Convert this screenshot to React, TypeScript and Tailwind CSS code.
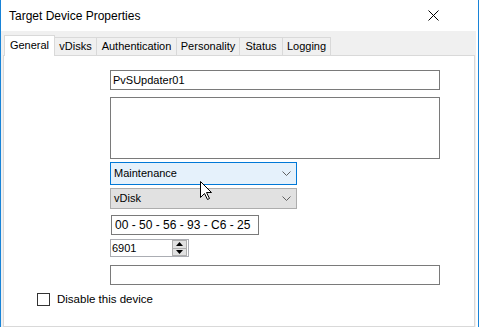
import { useState } from "react";

const TABS = [
  { label: "General", w: "w-[51px]" },
  { label: "vDisks", w: "w-[42px]" },
  { label: "Authentication", w: "w-[80px]" },
  { label: "Personality", w: "w-[63px]" },
  { label: "Status", w: "w-[43px]" },
  { label: "Logging", w: "w-[48px]" },
];

function Chevron() {
  return (
    <svg width="9" height="5" viewBox="0 0 9 5" className="shrink-0">
      <path d="M0.5 0.5 L4.5 4.5 L8.5 0.5" fill="none" stroke="#606060" strokeWidth="1" />
    </svg>
  );
}

function Cursor() {
  return (
    <svg width="13" height="20" viewBox="0 0 13 20" className="absolute left-[199px] top-[181px]">
      <path
        d="M0.5 0.5 L0.5 16.5 L4.5 12.5 L7.5 18.5 L9.5 17.5 L6.5 11.5 L11.5 11.5 Z"
        fill="#ffffff"
        stroke="#000000"
        strokeWidth="1"
        strokeLinejoin="miter"
      />
    </svg>
  );
}

export default function App() {
  const [tab, setTab] = useState("General");
  const [disabled, setDisabled] = useState(false);

  return (
    <div className="relative w-[479px] h-[327px] overflow-hidden bg-white border-x border-[#1883d7] font-['Liberation_Sans',Arial,sans-serif] text-[11px] text-black">
      {/* Title bar */}
      <div className="flex items-center justify-between h-[31px] pl-[8px] pr-[39px]">
        <span className="text-[12px] leading-none">Target Device Properties</span>
        <svg width="11" height="11" viewBox="0 0 11 11">
          <path d="M0.5 0.5 L10.5 10.5 M10.5 0.5 L0.5 10.5" stroke="#000" strokeWidth="1" />
        </svg>
      </div>

      <div className="flex flex-col h-[296px] mr-[2px] bg-[#f0f0f0] pl-[2px] pr-[1px]">
        {/* Tabs */}
        <div className="flex items-end h-[24px] pl-[1px]">
          {TABS.map((t, i) => {
            const active = t.label === tab;
            return (
              <div
                key={t.label}
                onClick={() => setTab(t.label)}
                className={`${t.w} flex items-center justify-center border-[#d9d9d9] cursor-default ${
                  active
                    ? "relative z-10 -mb-px h-[21px] bg-white border-x border-t pb-[2px]"
                    : `h-[18px] bg-[#f0f0f0] border-t border-r ${i === 0 ? "border-l" : ""}`
                }`}
              >
                {t.label}
              </div>
            );
          })}
        </div>

        {/* Panel */}
        <div className="relative flex-1 bg-white border border-[#d9d9d9] pt-[14px]">
          <div className="flex flex-col items-start pl-[106px]">
            <div className="w-[330px] h-[20px] border border-[#7a7a7a] flex items-center px-[2px]">
              PvSUpdater01
            </div>
            <div className="mt-[7px] w-[330px] h-[62px] border border-[#7a7a7a]" />

            <div className="mt-[3px] w-[187px] h-[23px] border border-[#0078d7] bg-[#e5f1fb] flex items-center justify-between pl-[3px] pr-[5px]">
              <span>Maintenance</span>
              <Chevron />
            </div>
            <div className="mt-[3px] w-[187px] h-[21px] border border-[#adadad] bg-[#e1e1e1] flex items-center justify-between pl-[3px] pr-[5px]">
              <span>vDisk</span>
              <Chevron />
            </div>

            <div className="mt-[6px] ml-px w-[148px] h-[20px] border border-[#7a7a7a] flex items-center pl-[3px] text-[12px]">
              00 - 50 - 56 - 93 - C6 - 25
            </div>

            <div className="mt-[4px] w-[79px] h-[18px] border border-[#abadb3] flex items-center justify-between pl-[1px] pr-px">
              <span>6901</span>
              <div className="flex flex-col w-[15px] h-[16px] border border-[#adadad] bg-[#e1e1e1]">
                <div className="flex-1 flex items-center justify-center border-b border-[#adadad]">
                  <svg width="7" height="4" viewBox="0 0 7 4">
                    <path d="M3.5 0 L7 4 L0 4 Z" fill="#000" />
                  </svg>
                </div>
                <div className="flex-1 flex items-center justify-center">
                  <svg width="7" height="4" viewBox="0 0 7 4">
                    <path d="M0 0 L7 0 L3.5 4 Z" fill="#000" />
                  </svg>
                </div>
              </div>
            </div>

            <div className="mt-[8px] w-[330px] h-[20px] border border-[#7a7a7a]" />
          </div>

          <label className="mt-[7px] ml-[33px] flex items-center gap-[7px] w-max text-[11.5px] leading-[14px]">
            <span
              onClick={() => setDisabled((d) => !d)}
              className="w-[13px] h-[13px] border border-[#333333] bg-white flex items-center justify-center text-[10px] leading-none"
            >
              {disabled ? "✓" : ""}
            </span>
            <span>Disable this device</span>
          </label>
        </div>
      </div>

      <Cursor />
    </div>
  );
}
